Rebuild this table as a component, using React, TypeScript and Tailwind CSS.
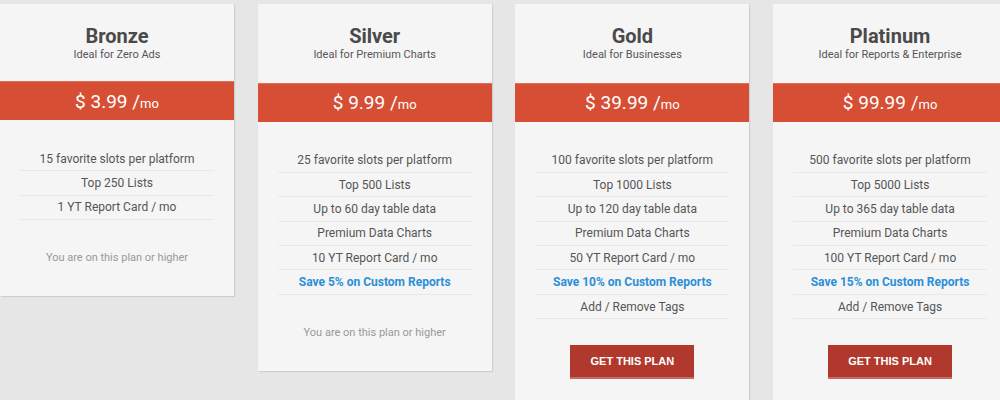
import React from "react";

type Plan = {
  name: string;
  tagline: string;
  price: string;
  features: { text: string; highlight?: boolean }[];
  current?: boolean;
  head: string;
};

const plans: Plan[] = [
  {
    name: "Bronze",
    tagline: "Ideal for Zero Ads",
    price: "3.99",
    current: true,
    head: "h-[77px]",
    features: [
      { text: "15 favorite slots per platform" },
      { text: "Top 250 Lists" },
      { text: "1 YT Report Card / mo" },
    ],
  },
  {
    name: "Silver",
    tagline: "Ideal for Premium Charts",
    price: "9.99",
    current: true,
    head: "h-[78.5px]",
    features: [
      { text: "25 favorite slots per platform" },
      { text: "Top 500 Lists" },
      { text: "Up to 60 day table data" },
      { text: "Premium Data Charts" },
      { text: "10 YT Report Card / mo" },
      { text: "Save 5% on Custom Reports", highlight: true },
    ],
  },
  {
    name: "Gold",
    tagline: "Ideal for Businesses",
    price: "39.99",
    head: "h-[78.5px]",
    features: [
      { text: "100 favorite slots per platform" },
      { text: "Top 1000 Lists" },
      { text: "Up to 120 day table data" },
      { text: "Premium Data Charts" },
      { text: "50 YT Report Card / mo" },
      { text: "Save 10% on Custom Reports", highlight: true },
      { text: "Add / Remove Tags" },
    ],
  },
  {
    name: "Platinum",
    tagline: "Ideal for Reports & Enterprise",
    price: "99.99",
    head: "h-[78.5px]",
    features: [
      { text: "500 favorite slots per platform" },
      { text: "Top 5000 Lists" },
      { text: "Up to 365 day table data" },
      { text: "Premium Data Charts" },
      { text: "100 YT Report Card / mo" },
      { text: "Save 15% on Custom Reports", highlight: true },
      { text: "Add / Remove Tags" },
    ],
  },
];

function PlanCard({ plan }: { plan: Plan }) {
  return (
    <div className="w-[234px] shrink-0 mt-[4px] bg-[#f5f5f5] shadow-[1px_1px_1px_rgba(0,0,0,0.1)]">
      <div className={`${plan.head} flex flex-col items-center pt-[20px]`}>
        <div className="text-[20px] leading-[24px] font-bold text-[#4a4a4a]">{plan.name}</div>
        <div className="text-[11px] leading-[14px] text-[#555]">{plan.tagline}</div>
      </div>

      <div className="h-[39px] flex items-center justify-center bg-[#d64f35] border-t border-[#e0705a] text-white">
        <span className="text-[19px] leading-none">$ {plan.price} /</span>
        <span className="text-[13px] leading-none mt-[4px]">mo</span>
      </div>

      <ul className="px-[20px] pt-[27px]">
        {plan.features.map((f) => (
          <li
            key={f.text}
            className={`h-[24.4px] flex items-center justify-center border-b border-[#e8e8e8] text-[12px] ${
              f.highlight ? "font-bold text-[#2b8fd8]" : "text-[#555]"
            }`}
          >
            {f.text}
          </li>
        ))}
      </ul>

      {plan.current ? (
        <div className="pt-[31px] pb-[31px] text-center text-[11px] leading-[14px] text-[#999]">
          You are on this plan or higher
        </div>
      ) : (
        <div className="pt-[26px] pb-[40px] flex justify-center">
          <button className="w-[124px] h-[32px] bg-[#b0382c] shadow-[0_2px_0_#c96a60] text-white text-[11px] font-bold font-['Liberation_Sans',Arial,sans-serif]">
            GET THIS PLAN
          </button>
        </div>
      )}
    </div>
  );
}

export default function App() {
  return (
    <div className="w-[1000px] h-[400px] overflow-hidden bg-[#e6e6e6] flex items-start gap-[23.7px] font-['Roboto',sans-serif]">
      {plans.map((p) => (
        <PlanCard key={p.name} plan={p} />
      ))}
    </div>
  );
}
